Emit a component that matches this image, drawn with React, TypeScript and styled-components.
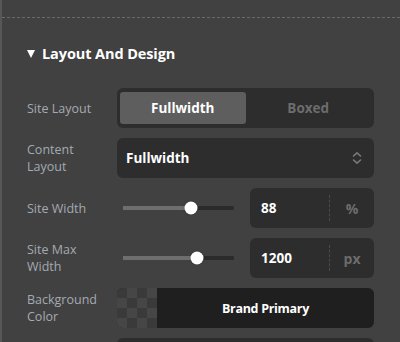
import React from "react";
import styled, { createGlobalStyle } from "styled-components";

const Global = createGlobalStyle`
  html, body { margin: 0; padding: 0; background: #414141; }
  body { font-family: "Open Sans", "Noto Sans", sans-serif; }
`;

const Frame = styled.div`
  width: 400px;
  height: 342px;
  box-sizing: border-box;
  border-left: 2px solid #575757;
  background: #414141;
  overflow: hidden;
`;

const TopBar = styled.div`
  height: 17px;
  border-bottom: 1px dashed #6a6a6a;
`;

const Section = styled.div`
  padding: 0 26px 0 25px;
`;

const Heading = styled.div`
  display: flex;
  align-items: center;
  gap: 7px;
  height: 20px;
  margin-top: 25px;
  margin-bottom: 25px;
  color: #ffffff;
  font-weight: 700;
  font-size: 14.5px;
  letter-spacing: -0.1px;
`;

const Caret = styled.span`
  width: 0;
  height: 0;
  border-left: 4.5px solid transparent;
  border-right: 4.5px solid transparent;
  border-top: 8px solid #ffffff;
  margin-top: 1px;
`;

const Rows = styled.div`
  display: flex;
  flex-direction: column;
  gap: 10px;
`;

const Row = styled.div`
  display: grid;
  grid-template-columns: 90px 1fr;
  align-items: center;
  height: 40px;
`;

const Label = styled.div`
  color: #a4aab2;
  font-size: 12.5px;
  line-height: 17px;
  padding-right: 10px;
`;

const Segmented = styled.div`
  display: grid;
  grid-template-columns: 1fr 1fr;
  height: 40px;
  box-sizing: border-box;
  padding: 4px 3px;
  border-radius: 6px;
  background: #2d2d2d;
`;

const SegButton = styled.div<{ $active?: boolean }>`
  display: flex;
  align-items: center;
  justify-content: center;
  border-radius: 3px;
  font-weight: 700;
  font-size: 13.5px;
  background: ${(p) => (p.$active ? "#5e5e5e" : "transparent")};
  color: ${(p) => (p.$active ? "#ffffff" : "#6c6c6c")};
`;

const Select = styled.div`
  display: flex;
  align-items: center;
  justify-content: space-between;
  height: 40px;
  box-sizing: border-box;
  padding: 0 11px 0 9px;
  border-radius: 6px;
  background: #2d2d2d;
  color: #ffffff;
  font-weight: 700;
  font-size: 13.5px;
`;

const SliderLine = styled.div`
  display: grid;
  grid-template-columns: 1fr 124px;
  gap: 16px;
  align-items: center;
`;

const Track = styled.div`
  position: relative;
  height: 4px;
  margin-left: 6px;
  background: #2b2b2b;
  border-radius: 1px;
`;

const Fill = styled.div`
  height: 100%;
  background: #6e6e6e;
`;

const Thumb = styled.div`
  position: absolute;
  top: 50%;
  width: 13px;
  height: 13px;
  border-radius: 50%;
  background: #ffffff;
  transform: translate(-50%, -50%);
  box-shadow: 0 0 2px rgba(0, 0, 0, 0.3);
`;

const NumberBox = styled.div`
  display: grid;
  grid-template-columns: 1fr 45px;
  align-items: center;
  height: 40px;
  border-radius: 6px;
  background: #2d2d2d;
`;

const NumValue = styled.div`
  padding-left: 11px;
  color: #ffffff;
  font-weight: 700;
  font-size: 13.5px;
`;

const Unit = styled.div`
  height: 26px;
  display: flex;
  align-items: center;
  justify-content: center;
  border-left: 1px dashed #4a4a4a;
  color: #6c6c6c;
  font-weight: 700;
  font-size: 14px;
`;

const ColorBox = styled.div`
  display: grid;
  grid-template-columns: 40px 1fr;
  height: 40px;
  border-radius: 6px;
  overflow: hidden;
  background: #1f1f1f;
`;

const Checker = styled.div`
  background-color: #3a3a3a;
  background-image:
    linear-gradient(45deg, #464646 25%, transparent 25%, transparent 75%, #464646 75%),
    linear-gradient(45deg, #464646 25%, transparent 25%, transparent 75%, #464646 75%);
  background-size: 20px 20px;
  background-position: 0 0, 10px 10px;
`;

const ColorName = styled.div`
  display: flex;
  align-items: center;
  justify-content: center;
  color: #ffffff;
  font-weight: 700;
  font-size: 12.5px;
  letter-spacing: -0.3px;
`;

const NextBox = styled.div`
  height: 40px;
  border-radius: 6px;
  background: #2d2d2d;
`;

const Spacer = styled.div``;

const ChevronUpDown = () => (
  <svg width="12" height="14" viewBox="0 0 12 14" fill="none" stroke="#7a7a7a" strokeWidth="1.6" strokeLinecap="round" strokeLinejoin="round">
    <path d="M2.5 5L6 1.8L9.5 5" />
    <path d="M2.5 9L6 12.2L9.5 9" />
  </svg>
);

const Slider = ({ pct }: { pct: number }) => (
  <Track>
    <Fill style={{ width: `${pct}%` }} />
    <Thumb style={{ left: `${pct}%` }} />
  </Track>
);

export default function App() {
  return (
    <>
      <Global />
      <Frame>
        <TopBar />
        <Section>
          <Heading>
            <Caret />
            Layout And Design
          </Heading>
          <Rows>
            <Row>
              <Label>Site Layout</Label>
              <Segmented>
                <SegButton $active>Fullwidth</SegButton>
                <SegButton>Boxed</SegButton>
              </Segmented>
            </Row>
            <Row>
              <Label>Content Layout</Label>
              <Select>
                Fullwidth
                <ChevronUpDown />
              </Select>
            </Row>
            <Row>
              <Label>Site Width</Label>
              <SliderLine>
                <Slider pct={61} />
                <NumberBox>
                  <NumValue>88</NumValue>
                  <Unit>%</Unit>
                </NumberBox>
              </SliderLine>
            </Row>
            <Row>
              <Label>Site Max Width</Label>
              <SliderLine>
                <Slider pct={67} />
                <NumberBox>
                  <NumValue>1200</NumValue>
                  <Unit>px</Unit>
                </NumberBox>
              </SliderLine>
            </Row>
            <Row>
              <Label>Background Color</Label>
              <ColorBox>
                <Checker />
                <ColorName>Brand Primary</ColorName>
              </ColorBox>
            </Row>
            <Row>
              <Spacer />
              <NextBox />
            </Row>
          </Rows>
        </Section>
      </Frame>
    </>
  );
}
